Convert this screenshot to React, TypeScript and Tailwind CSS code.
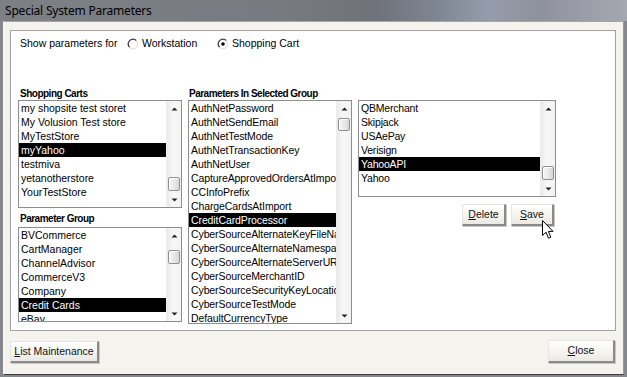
import React from "react";

function Tri({ down }: { down?: boolean }) {
  return (
    <svg width="7" height="4" viewBox="0 0 7 4">
      {down ? (
        <polygon points="0.5,0.5 6.5,0.5 3.5,3.5" fill="#222" />
      ) : (
        <polygon points="0.5,3.5 6.5,3.5 3.5,0.5" fill="#222" />
      )}
    </svg>
  );
}

function Scrollbar({ thumbClass }: { thumbClass: string }) {
  return (
    <div className="w-[15px] h-full flex flex-col border-l border-[#ececec] bg-[linear-gradient(90deg,#eaeaea,#f7f7f7_40%,#f3f3f3)]">
      <div className="h-[15px] flex items-center justify-center shrink-0">
        <Tri />
      </div>
      <div className="flex-1 flex flex-col">
        <div
          className={
            "mx-[1px] rounded-[2px] border border-[#8f9091] bg-[linear-gradient(90deg,#f6f6f6,#e9e9e9_50%,#d6d6d6)] shadow-[inset_1px_1px_0_#ffffff] " +
            thumbClass
          }
        />
      </div>
      <div className="h-[15px] flex items-center justify-center shrink-0">
        <Tri down />
      </div>
    </div>
  );
}

function ListBox({
  items,
  selected,
  boxClass,
  thumbClass,
  textClass,
}: {
  items: string[];
  selected: number;
  boxClass: string;
  thumbClass: string;
  textClass?: string;
}) {
  return (
    <div className={"border border-[#8d8d8d] bg-white flex overflow-hidden " + boxClass}>
      <div className={"flex-1 min-w-0 overflow-hidden text-[10.5px] " + (textClass || "")}>
        {items.map((it, i) => (
          <div
            key={i}
            className={
              "h-[14px] leading-[14px] pl-[2px] whitespace-nowrap overflow-hidden " +
              (i === selected ? "bg-black text-white" : "text-black")
            }
          >
            {it}
          </div>
        ))}
      </div>
      <Scrollbar thumbClass={thumbClass} />
    </div>
  );
}

function Radio({ checked }: { checked?: boolean }) {
  return (
    <svg width="12" height="12" viewBox="0 0 12 12">
      <circle cx="6" cy="6" r="5" fill="#fff" />
      <path d="M2.6 9.4 A4.8 4.8 0 0 1 9.4 2.6" stroke="#3a3a3a" strokeWidth="1.3" fill="none" />
      <path d="M9.4 2.6 A4.8 4.8 0 0 1 2.6 9.4" stroke="#e2e2e2" strokeWidth="1.2" fill="none" />
      {checked && <circle cx="6" cy="6" r="1.8" fill="#000" />}
    </svg>
  );
}

function Btn({
  className,
  u,
  rest,
}: {
  className: string;
  u: string;
  rest: string;
}) {
  return (
    <div
      className={
        "flex items-center justify-center text-[10.5px] text-[#111] bg-[linear-gradient(180deg,#ffffff,#f4f3ee_60%,#e9e8e2)] border-t border-l border-[#e4e4e4] border-r-2 border-b-2 border-r-[#8a8a8a] border-b-[#8a8a8a] shadow-[1px_1px_0_#c8c8c8] " +
        className
      }
    >
      <span>
        <span className="underline">{u}</span>
        {rest}
      </span>
    </div>
  );
}

export default function App() {
  const carts = [
    "my shopsite test storet",
    "My Volusion Test store",
    "MyTestStore",
    "myYahoo",
    "testmiva",
    "yetanotherstore",
    "YourTestStore",
  ];
  const groups = [
    "BVCommerce",
    "CartManager",
    "ChannelAdvisor",
    "CommerceV3",
    "Company",
    "Credit Cards",
    "eBay",
  ];
  const params = [
    "AuthNetPassword",
    "AuthNetSendEmail",
    "AuthNetTestMode",
    "AuthNetTransactionKey",
    "AuthNetUser",
    "CaptureApprovedOrdersAtImport",
    "CCInfoPrefix",
    "ChargeCardsAtImport",
    "CreditCardProcessor",
    "CyberSourceAlternateKeyFileName",
    "CyberSourceAlternateNamespace",
    "CyberSourceAlternateServerURL",
    "CyberSourceMerchantID",
    "CyberSourceSecurityKeyLocation",
    "CyberSourceTestMode",
    "DefaultCurrencyType",
  ];
  const values = ["QBMerchant", "Skipjack", "USAePay", "Verisign", "YahooAPI", "Yahoo"];

  return (
    <div className="relative w-[627px] h-[377px] overflow-hidden flex flex-col bg-[#85878c] font-['Liberation_Sans',Arial,sans-serif]">
      {/* title bar */}
      <div className="h-[21px] shrink-0 flex items-center pl-[5px] text-[12px] text-black font-['Noto_Sans','Liberation_Sans',sans-serif] tracking-[-0.2px] bg-[linear-gradient(90deg,#7d8085_0%,#777a80_45%,#6f727a_60%,#7f8794_70%,#959cab_78%,#8e929c_86%,#a6a8b1_100%)]">
        Special System Parameters
      </div>
      {/* body */}
      <div className="flex-1 flex flex-col ml-[3px] mr-[3px] mb-[2px] bg-[#f4f3ee] border-t border-[#a5a5a5] border-l border-l-[#f8f8f8] border-r border-r-[#9a9a9a] border-b border-b-[#3e3e3e]">
        {/* white panel */}
        <div className="mt-[8px] ml-[6px] w-[606px] h-[301px] bg-white border border-[#a3a3a3] flex flex-col">
          <div className="mt-[6px] ml-[9px] h-[14px] flex items-center text-[10.5px] text-black">
            <span className="w-[107px]">Show parameters for</span>
            <span className="w-[90px] flex items-center">
              <Radio />
              <span className="ml-[3px]">Workstation</span>
            </span>
            <span className="flex items-center">
              <Radio checked />
              <span className="ml-[3px]">Shopping Cart</span>
            </span>
          </div>
          <div className="mt-[35px] ml-[7px] flex">
            {/* left column */}
            <div className="w-[164px] flex flex-col">
              <div className="h-[14px] flex items-center pl-[2px] text-[10px] font-bold tracking-[-0.5px] text-black">
                Shopping Carts
              </div>
              <ListBox items={carts} selected={3} boxClass="h-[108px]" thumbClass="mt-[61px] h-[14px]" />
              <div className="h-[19px] flex items-center pt-[1px] pl-[2px] text-[10px] font-bold tracking-[-0.5px] text-black">
                Parameter Group
              </div>
              <ListBox items={groups} selected={5} boxClass="h-[95px]" thumbClass="mt-[7px] h-[14px]" />
            </div>
            {/* middle column */}
            <div className="ml-[6px] w-[164px] flex flex-col">
              <div className="h-[14px] flex items-center pl-[1px] text-[10px] font-bold tracking-[-0.5px] text-black">
                Parameters In Selected Group
              </div>
              <ListBox
                items={params}
                selected={8}
                boxClass="h-[224px]"
                thumbClass="mt-[2px] h-[13px]"
                textClass="tracking-[-0.1px]"
              />
            </div>
            {/* right column */}
            <div className="ml-[6px] w-[198px] flex flex-col pt-[14px]">
              <ListBox
                items={values}
                selected={4}
                boxClass="h-[97px]"
                thumbClass="mt-[50px] h-[14px]"
                textClass="tracking-[-0.2px]"
              />
              <div className="mt-[7px] flex justify-end gap-[5px] pr-[2px]">
                <Btn className="w-[44px] h-[22px]" u="D" rest="elete" />
                <Btn className="w-[43px] h-[22px]" u="S" rest="ave" />
              </div>
            </div>
          </div>
        </div>
        {/* bottom buttons */}
        <div className="mt-[9px] flex justify-between items-start ml-[6px] mr-[8px]">
          <Btn className="w-[89px] h-[22px] mt-[1px]" u="L" rest="ist Maintenance" />
          <Btn className="w-[67px] h-[23px]" u="C" rest="lose" />
        </div>
      </div>
      {/* mouse cursor */}
      <svg className="absolute left-[542px] top-[220px]" width="13" height="20" viewBox="0 0 13 20">
        <path
          d="M0.5 0.5 L0.5 15.5 L4 12.2 L6.5 18.2 L8.8 17.2 L6.4 11.4 L11 11.4 Z"
          fill="#fff"
          stroke="#000"
          strokeWidth="1"
          strokeLinejoin="round"
        />
      </svg>
    </div>
  );
}
